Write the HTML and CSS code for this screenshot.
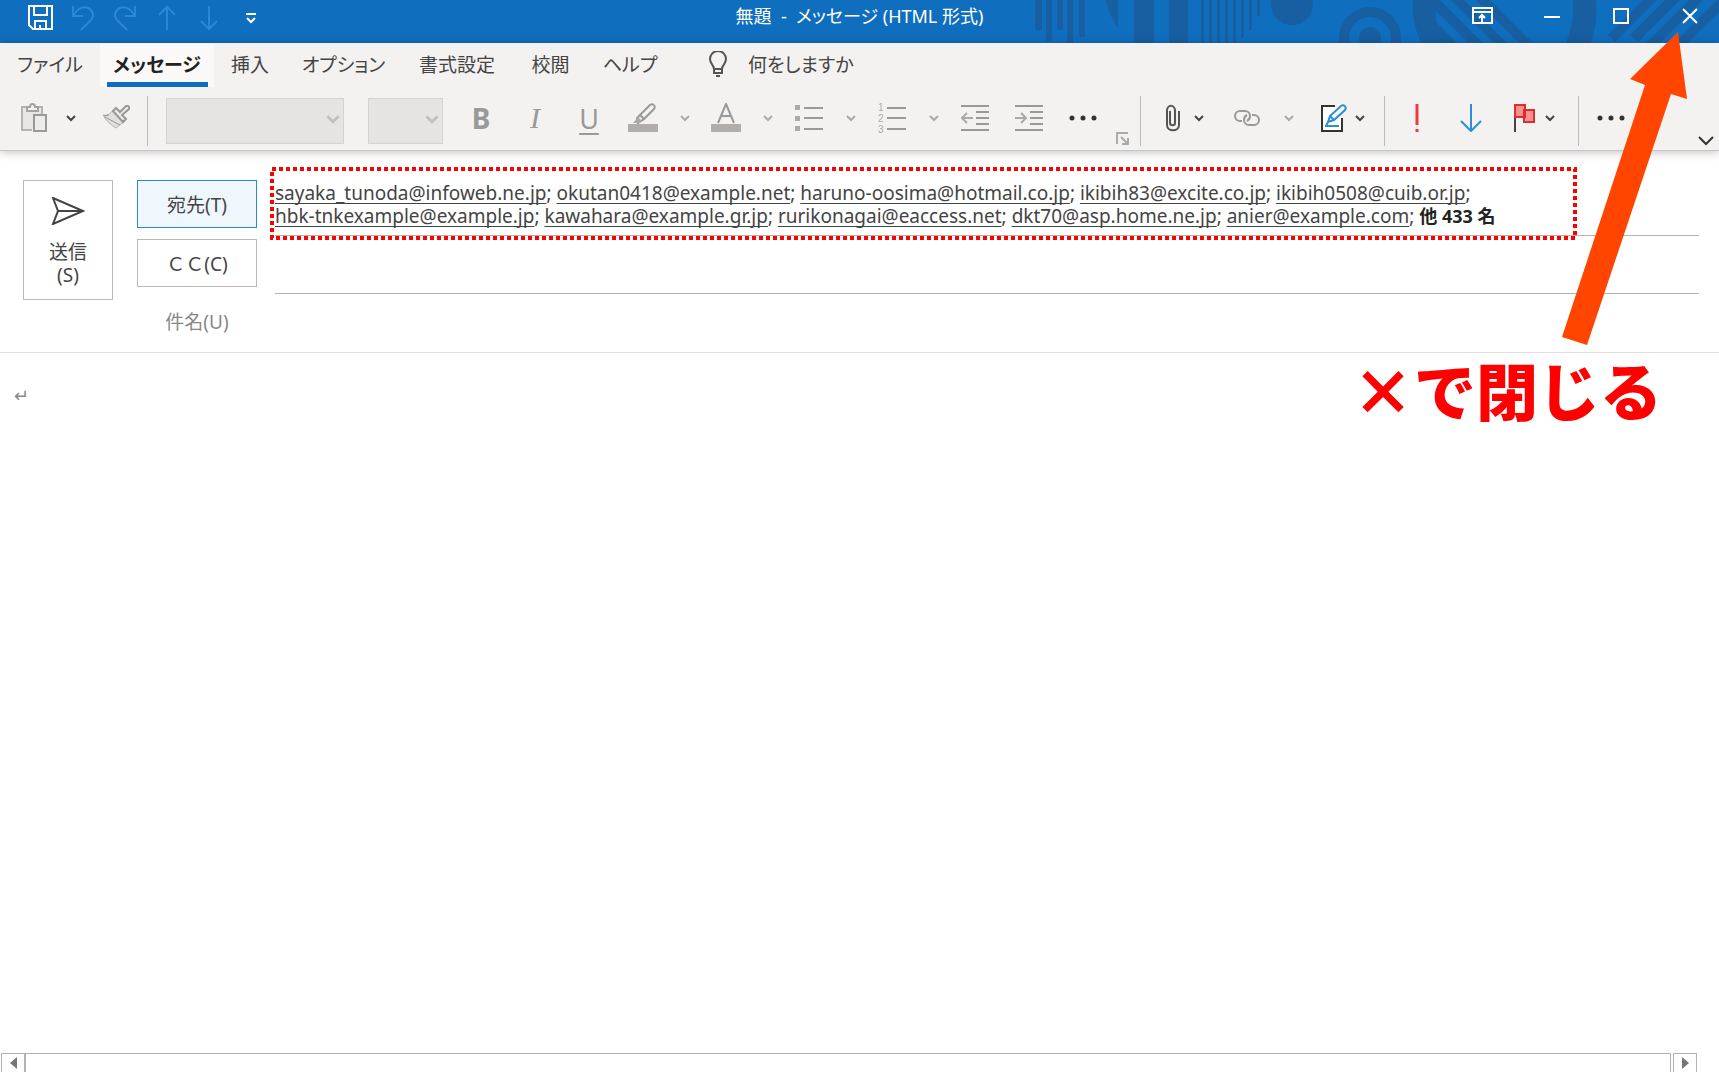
FILE: index.html
```html
<!DOCTYPE html>
<html lang="ja">
<head>
    <meta charset="UTF-8">
    <meta name="viewport" content="width=device-width, initial-scale=1.0">
    <title>無題 - メッセージ (HTML 形式)</title>
    <link rel="stylesheet" href="styles.css">
</head>
<body>

<svg class="defs" aria-hidden="true">
    <symbol id="chevron" viewBox="0 0 10 10"><path d="M1 3l4 4 4-4" fill="none" stroke="currentColor" stroke-width="2"/></symbol>
</svg>

<!-- Title bar -->
<header class="title-bar">
    <svg class="title-pattern" width="684" height="43" viewBox="0 0 684 43" aria-hidden="true">
        <g fill="#175fa1">
            <path d="M0 0h7v30H0zM11 0h6v41h-6zM22 0h6v30h-6zM32 0h6v43h-6zM44 0h6v37h-6z"/>
            <path d="M71 0h12v28Q75 18 71 0z"/>
            <path d="M99 0h20v43H99zM134 0h19v43h-19z"/>
            <path d="M166 0h3v43h-3zM174 0h3v43h-3zM182 0h3v43h-3zM190 0h3v43h-3zM198 0h3v43h-3zM206 0h3v38h-3zM214 0h3v30h-3zM222 0h3v16h-3z"/>
            <circle cx="257" cy="4" r="21"/>
            <circle cx="335" cy="38" r="11"/>
            <path d="M378 0h23v22L415 43H386Q376 20 378 0z"/>
            <path d="M401 0h4L448 43H434L401 11zM401 22L422 43H408L401 36zM416 0h13l43 43h-13zM441 0h14l43 43h-14z"/>
            <path d="M538 0h23q2 22-5 43h-25q9-22 7-43z"/>
            <path d="M573 35L608 0h14L580 42zM595 35L630 0h15L603 42zM611 43L654 0h14L625 43zM639 43L682 0h2v12L653 43z"/>
        </g>
        <circle cx="335" cy="38" r="26" fill="none" stroke="#175fa1" stroke-width="10"/>
    </svg>
    <div class="quick-access">
        <button class="quick" aria-label="上書き保存">
            <svg width="26" height="26" viewBox="0 0 26 26"><path d="M1 1h23v23H5l-4-4zM6 1v9h13V1M7 24v-8h11v8M12 24v-4" fill="none" stroke="#fff" stroke-width="2"/></svg>
        </button>
        <button class="quick" disabled aria-label="元に戻す">
            <svg width="24" height="26" viewBox="0 0 24 26"><path d="M2 1v10h10M2 11C7 3 12 1 17 3c6 3 6 9 3 12L10 25" fill="none" stroke="currentColor" stroke-width="2"/></svg>
        </button>
        <button class="quick" disabled aria-label="やり直し">
            <svg width="24" height="26" viewBox="0 0 24 26"><path d="M22 1v10H12M22 11C17 3 12 1 7 3 1 6 1 12 4 15l10 10" fill="none" stroke="currentColor" stroke-width="2"/></svg>
        </button>
        <button class="quick" disabled aria-label="前のアイテム">
            <svg width="18" height="26" viewBox="0 0 18 26"><path d="M9 25V2M1 10l8-8 8 8" fill="none" stroke="currentColor" stroke-width="2"/></svg>
        </button>
        <button class="quick" disabled aria-label="次のアイテム">
            <svg width="18" height="26" viewBox="0 0 18 26"><path d="M9 1v23M1 16l8 8 8-8" fill="none" stroke="currentColor" stroke-width="2"/></svg>
        </button>
        <button class="quick" aria-label="クイック アクセス ツール バーのカスタマイズ">
            <svg width="12" height="12" viewBox="0 0 12 12"><path d="M1 2h10M2 6l4 4 4-4" fill="none" stroke="#fff" stroke-width="2"/></svg>
        </button>
    </div>
    <div class="window-title">無題&nbsp; -&nbsp; メッセージ (HTML 形式)</div>
    <div class="window-buttons">
        <button class="window-btn" aria-label="リボンの表示オプション">
            <svg width="22" height="18" viewBox="0 0 22 18"><path d="M1 1h19v15H1zM1 5h19M10 15V8M7 11l3-3 3 3" fill="none" stroke="#fff" stroke-width="2"/></svg>
        </button>
        <button class="window-btn" aria-label="最小化">
            <svg width="16" height="16" viewBox="0 0 16 16"><path d="M0 9h16" stroke="#fff" stroke-width="2"/></svg>
        </button>
        <button class="window-btn" aria-label="最大化">
            <svg width="16" height="16" viewBox="0 0 16 16"><path d="M1 1h14v14H1z" fill="none" stroke="#fff" stroke-width="2"/></svg>
        </button>
        <button class="window-btn close" aria-label="閉じる">
            <svg width="16" height="16" viewBox="0 0 16 16"><path d="M1 1l14 14M15 1L1 15" stroke="#fff" stroke-width="2"/></svg>
        </button>
    </div>
</header>

<!-- Ribbon -->
<div class="ribbon">
    <nav class="tabs">
        <button class="tab">ファイル</button>
        <button class="tab active">メッセージ</button>
        <button class="tab">挿入</button>
        <button class="tab">オプション</button>
        <button class="tab">書式設定</button>
        <button class="tab">校閲</button>
        <button class="tab">ヘルプ</button>
        <button class="tab tell-me">
            <svg width="20" height="26" viewBox="0 0 20 26"><path d="M6 18c0-4-4-5-4-10a8 8 0 0 1 16 0c0 5-4 6-4 10zM6 18v4h8v-4M8 25h4" fill="none" stroke="#555" stroke-width="2"/></svg>
            何をしますか
        </button>
    </nav>

    <div class="toolbar">
        <div class="group clipboard">
            <button class="tool narrow" aria-label="貼り付け">
                <svg width="28" height="30" viewBox="0 0 28 30"><path d="M12 27H2V4h20v9" fill="#e8e7e6" stroke="#b3b3b3" stroke-width="2"/><path d="M7 8V4h3c0-4 5-4 5 0h3v4z" fill="#f3f2f1" stroke="#a3a3a3" stroke-width="2"/><path d="M14 12h12v16H14z" fill="#ececeb" stroke="#999" stroke-width="2"/></svg>
            </button>
            <button class="arrow dark" aria-label="貼り付けのオプション"><svg width="10" height="10"><use href="#chevron"/></svg></button>
            <button class="tool" aria-label="書式のコピー">
                <svg width="28" height="26" viewBox="0 0 28 26"><path d="M1 10c4 1 7-1 10-5l12 11-9 7C9 20 4 16 1 10z" fill="#e0dfde" stroke="#b3b3b3" stroke-width="1"/><path d="M3 12l15 8M7 10l-5 1" stroke="#999"/><path d="M11 6l3-3 4 4 6-6c2-1 4 1 3 3l-7 6 4 4-3 3z" fill="#ececeb" stroke="#999" stroke-width="2"/></svg>
            </button>
        </div>

        <div class="group font">
            <span class="combo">
                <select class="font-name" disabled aria-label="フォント"></select>
                <svg width="14" height="14"><use href="#chevron"/></svg>
            </span>
            <span class="combo">
                <select class="font-size" disabled aria-label="フォント サイズ"></select>
                <svg width="14" height="14"><use href="#chevron"/></svg>
            </span>
            <div class="tools">
                <button class="tool bold" disabled>B</button>
                <button class="tool italic" disabled>I</button>
                <button class="tool underline" disabled>U</button>
                <button class="tool" disabled aria-label="蛍光ペンの色">
                    <svg width="30" height="30" viewBox="0 0 30 30"><path d="M0 21h30v8H0z" fill="#b1adaa"/><path d="M12 12L22 2c3-2 6 1 4 4L16 16zM12 12l-3 3 1 5 6-4" fill="#f3f2f1" stroke="#999" stroke-width="2"/><path d="M5 20l5-6 4 4-3 2z" fill="#aaa"/></svg>
                </button>
                <button class="arrow" disabled aria-label="蛍光ペンの色の一覧"><svg width="10" height="10"><use href="#chevron"/></svg></button>
                <button class="tool" disabled aria-label="フォントの色">
                    <svg width="30" height="30" viewBox="0 0 30 30"><path d="M0 21h30v8H0z" fill="#b1adaa"/><path d="M7 20L15 1l8 19M10 13h10" fill="none" stroke="#999" stroke-width="2"/></svg>
                </button>
                <button class="arrow" disabled aria-label="フォントの色の一覧"><svg width="10" height="10"><use href="#chevron"/></svg></button>
                <button class="tool" disabled aria-label="箇条書き">
                    <svg width="28" height="28" viewBox="0 0 28 28"><path d="M0 1h5v5H0zM0 12h5v5H0zM0 22h5v5H0z" fill="#aaa"/><path d="M9 4h19M9 14h19M9 25h19" stroke="#999" stroke-width="2"/></svg>
                </button>
                <button class="arrow" disabled aria-label="行頭文字の一覧"><svg width="10" height="10"><use href="#chevron"/></svg></button>
                <button class="tool" disabled aria-label="段落番号">
                    <svg width="30" height="38" viewBox="0 0 30 38"><g class="list-number"><text x="1" y="12">1</text><text x="1" y="23">2</text><text x="1" y="34">3</text></g><path d="M10 9h19M10 19h19M10 30h19" stroke="#999" stroke-width="2"/></svg>
                </button>
                <button class="arrow" disabled aria-label="番号の一覧"><svg width="10" height="10"><use href="#chevron"/></svg></button>
                <button class="tool" disabled aria-label="インデントを減らす">
                    <svg width="28" height="28" viewBox="0 0 28 28"><path d="M0 2h28M15 8h13M15 14h13M15 20h13M0 26h28" stroke="#999" stroke-width="2"/><path d="M12 14H2M6 9l-5 5 5 5" fill="none" stroke="#aaa" stroke-width="2"/></svg>
                </button>
                <button class="tool" disabled aria-label="インデントを増やす">
                    <svg width="28" height="28" viewBox="0 0 28 28"><path d="M0 2h28M15 8h13M15 14h13M15 20h13M0 26h28" stroke="#999" stroke-width="2"/><path d="M0 14h11M6 9l5 5-5 5" fill="none" stroke="#aaa" stroke-width="2"/></svg>
                </button>
                <button class="tool" aria-label="その他の書式">
                    <svg width="28" height="6" viewBox="0 0 28 6"><path d="M3 3h0M14 3h0M25 3h0" stroke="#333" stroke-width="5" stroke-linecap="round"/></svg>
                </button>
            </div>
            <button class="launcher" aria-label="フォントの設定">
                <svg width="13" height="13" viewBox="0 0 13 13"><path d="M1 12V1h11M5 5l7 7M12 6v6H6" fill="none" stroke="#aaa" stroke-width="2"/></svg>
            </button>
        </div>

        <div class="group include">
            <button class="tool narrow" aria-label="ファイルの添付">
                <svg width="16" height="28" viewBox="0 0 16 28"><path d="M5 7v12c0 3 5 3 5 0V7c0-7-8-7-8 0v14c0 7 12 7 12 0V7" fill="none" stroke="#555" stroke-width="2"/></svg>
            </button>
            <button class="arrow small dark" aria-label="添付のオプション"><svg width="10" height="10"><use href="#chevron"/></svg></button>
            <button class="tool link" disabled aria-label="リンク">
                <svg width="28" height="18" viewBox="0 0 28 18"><path d="M9 12H7a5 5 0 0 1 0-10h5a5 5 0 0 1 5 5c0 2-1 4-3 5" fill="none" stroke="#999" stroke-width="2"/><path d="M19 6h2a5 5 0 0 1 0 10h-5a5 5 0 0 1-5-5c0-2 1-4 3-5" fill="none" stroke="#999" stroke-width="2"/></svg>
            </button>
            <button class="arrow" disabled aria-label="リンクのオプション"><svg width="10" height="10"><use href="#chevron"/></svg></button>
            <button class="tool narrow signature" aria-label="署名">
                <svg width="28" height="30" viewBox="0 0 28 30"><path d="M15 3H2v25h20V15" fill="#fff" stroke="#333" stroke-width="2"/><path d="M8 19l2-6L21 3c3-2 6 1 4 4L14 17zM8 19l-2 4M10 13l4 4M5 23h14" fill="#fff" stroke="#2b8fd6" stroke-width="2"/></svg>
            </button>
            <button class="arrow small dark" aria-label="署名のオプション"><svg width="10" height="10"><use href="#chevron"/></svg></button>
        </div>

        <div class="group tags">
            <button class="tool" aria-label="重要度 - 高">
                <svg width="6" height="28" viewBox="0 0 6 28"><path d="M3 0v21M3 25v3" stroke="#ee3a3f" stroke-width="3"/></svg>
            </button>
            <button class="tool" aria-label="重要度 - 低">
                <svg width="22" height="28" viewBox="0 0 22 28"><path d="M11 0v26M1 17l10 10 10-10" fill="none" stroke="#2b8fd6" stroke-width="2"/></svg>
            </button>
            <button class="tool narrow flag" aria-label="フラグの設定">
                <svg width="22" height="28" viewBox="0 0 22 28"><path d="M2 0v28" stroke="#444" stroke-width="2"/><path d="M2 1h10v12H2zM11 6h10v12H11z" fill="#ff8f94" stroke="#d9302c" stroke-width="2"/></svg>
            </button>
            <button class="arrow small dark" aria-label="フラグのオプション"><svg width="10" height="10"><use href="#chevron"/></svg></button>
        </div>

        <div class="group more">
            <button class="tool" aria-label="その他のコマンド">
                <svg width="28" height="6" viewBox="0 0 28 6"><path d="M3 3h0M14 3h0M25 3h0" stroke="#333" stroke-width="5" stroke-linecap="round"/></svg>
            </button>
        </div>

        <button class="expand" aria-label="リボンを展開">
            <svg width="16" height="10" viewBox="0 0 16 10"><path d="M1 1l7 7 7-7" fill="none" stroke="#333" stroke-width="2"/></svg>
        </button>
    </div>
</div>

<!-- Recipients and subject -->
<section class="mail-header">
    <button class="send">
        <svg width="34" height="28" viewBox="0 0 34 28"><path d="M2 1l30 13L2 27l5-13zM7 14h25" fill="none" stroke="#444" stroke-width="2"/></svg>
        <span>送信<br>(S)</span>
    </button>
    <div class="labels">
        <button class="label-btn selected">宛先(T)</button>
        <button class="label-btn">ＣＣ(C)</button>
        <label class="subject-label" for="subject">件名(U)</label>
    </div>
    <div class="fields">
        <div class="field to-field">
            <a href="mailto:sayaka_tunoda@infoweb.ne.jp">sayaka_tunoda@infoweb.ne.jp</a>;
            <a href="mailto:okutan0418@example.net">okutan0418@example.net</a>;
            <a href="mailto:haruno-oosima@hotmail.co.jp">haruno-oosima@hotmail.co.jp</a>;
            <a href="mailto:ikibih83@excite.co.jp">ikibih83@excite.co.jp</a>;
            <a href="mailto:ikibih0508@cuib.or.jp">ikibih0508@cuib.or.jp</a>;<br>
            <a href="mailto:hbk-tnkexample@example.jp">hbk-tnkexample@example.jp</a>;
            <a href="mailto:kawahara@example.gr.jp">kawahara@example.gr.jp</a>;
            <a href="mailto:rurikonagai@eaccess.net">rurikonagai@eaccess.net</a>;
            <a href="mailto:dkt70@asp.home.ne.jp">dkt70@asp.home.ne.jp</a>;
            <a href="mailto:anier@example.com">anier@example.com</a>;
            <strong>他 433 名</strong>
            <svg class="highlight" aria-hidden="true"><rect x="2" y="2" width="100%" height="100%"/></svg>
        </div>
        <input class="field" type="text" aria-label="CC">
        <input class="field last" type="text" id="subject">
    </div>
</section>

<!-- Message body -->
<textarea class="message" aria-label="本文">↵</textarea>

<div class="scrollbar">
    <button class="scroll-btn" aria-label="左へスクロール"><svg width="7" height="12" viewBox="0 0 7 12"><path d="M7 0v12L0 6z" fill="#777"/></svg></button>
    <div class="scroll-thumb"></div>
    <button class="scroll-btn" aria-label="右へスクロール"><svg width="7" height="12" viewBox="0 0 7 12"><path d="M0 0v12l7-6z" fill="#777"/></svg></button>
</div>

<!-- Callout pointing at the close button -->
<div class="callout">
    <svg width="126" height="313" viewBox="0 0 126 313" aria-hidden="true"><path d="M116 0l9 67-16-5-84 251-25-8L83 53l-15-6z" fill="#ff4500"/></svg>
    <p>×で閉じる</p>
</div>

</body>
</html>
```
FILE: styles.css
```css
* {
    box-sizing: border-box;
}

body {
    margin: 0;
    min-height: 100vh;
    display: flex;
    flex-direction: column;
    position: relative;
    background-color: #fff;
    color: #444;
    font-family: "Noto Sans", "Noto Sans CJK JP", sans-serif;
    font-size: 18px;
}

button {
    display: flex;
    align-items: center;
    justify-content: center;
    padding: 0;
    border: none;
    background: none;
    color: inherit;
    font: inherit;
}

svg {
    display: block;
    flex: none;
}

.defs {
    position: absolute;
    width: 0;
    height: 0;
}

/* Title bar */
.title-bar {
    position: relative;
    display: grid;
    grid-template-columns: 1fr auto 1fr;
    height: 43px;
    padding-bottom: 7px;
    background-color: #106ebe;
    color: #fff;
}

.title-pattern {
    position: absolute;
    top: 0;
    right: 0;
}

.quick-access {
    display: flex;
    padding-left: 20px;
}

.quick {
    width: 42px;
}

.quick:disabled {
    color: #2b88d8;
}

.window-title {
    align-self: center;
    line-height: 32px;
    padding-bottom: 4px;
    font-feature-settings: "palt";
}

.window-buttons {
    position: relative;
    display: flex;
    justify-content: flex-end;
    padding-bottom: 4px;
}

.window-btn {
    width: 69px;
}

.window-btn.close {
    width: 64px;
    padding-left: 6px;
}

/* Ribbon */
.ribbon {
    position: relative;
    background-color: #f3f2f1;
    border-bottom: 1px solid #c8c6c4;
    box-shadow: 0 1px 9px rgba(0, 0, 0, 0.25);
}

.tabs {
    display: grid;
    grid-template-columns: 100px 114px 72px 115px 112px 75px 84px auto 1fr;
    height: 43px;
    font-size: 19px;
    font-feature-settings: "palt";
}

.tab {
    height: 43px;
    padding-top: 4px;
    border-bottom: 5px solid transparent;
    white-space: nowrap;
}

.tab.active {
    margin-top: 1px;
    padding-top: 2px;
    background: linear-gradient(#106ebe, #106ebe) 50% 100% / 101px 5px no-repeat #faf9f8;
    background-origin: border-box;
    color: #222;
    font-weight: bold;
}

.tell-me {
    gap: 20px;
    padding-left: 36px;
}

.toolbar {
    display: flex;
    height: 64px;
    padding: 10px 0 4px;
}

.group {
    display: flex;
    align-items: center;
    border-right: 1px solid #bbb;
}

.clipboard {
    gap: 4px;
    padding-left: 16px;
    padding-right: 4px;
}

.font {
    padding-left: 18px;
    padding-right: 11px;
}

.include {
    padding-left: 14px;
    padding-right: 16px;
}

.tags {
    padding-left: 5px;
    padding-right: 20px;
}

.more {
    padding-left: 5px;
    border: none;
}

.tools {
    display: flex;
    margin-left: 11px;
}

.tool,
.arrow {
    width: 54px;
    height: 44px;
    padding-bottom: 6px;
}

.tool.narrow {
    width: 36px;
}

.tool:disabled {
    color: #999;
}

.link,
.signature {
    margin-left: 13px;
}

.flag {
    margin-left: 8px;
}

.arrow {
    width: 29px;
    color: #aaa;
}

.arrow.small {
    width: 16px;
}

.arrow.dark {
    color: #444;
}

.combo {
    position: relative;
    color: #c0c0c0;
}

.combo + .combo {
    margin-left: 24px;
}

.combo select {
    display: block;
    height: 46px;
    appearance: none;
    background-color: #e1dfdd;
    border: 1px solid #c8c6c4;
    border-radius: 0;
}

.combo svg {
    position: absolute;
    right: 4px;
    top: 14px;
}

.font-name {
    width: 178px;
}

.font-size {
    width: 75px;
}

.bold {
    font-size: 28px;
    font-weight: bold;
}

.italic {
    font-family: "Liberation Serif", serif;
    font-size: 30px;
    font-style: italic;
}

.underline {
    font-size: 27px;
    text-decoration: underline;
    text-decoration-thickness: 2px;
    text-underline-offset: 4px;
}

.list-number {
    fill: #aaa;
    font-family: "Liberation Sans", sans-serif;
    font-size: 10px;
}

.launcher {
    align-self: flex-end;
    height: 16px;
    margin-left: 6px;
}

.expand {
    align-self: flex-end;
    margin-left: auto;
    padding-right: 5px;
}

/* Recipients and subject */
.mail-header {
    display: flex;
    padding: 29px 20px 0 23px;
    border-bottom: 1px solid #e1dfdd;
    font-size: 19px;
}

.send {
    flex-direction: column;
    gap: 16px;
    width: 90px;
    height: 120px;
    padding-top: 3px;
    border: 1px solid #bbb8b5;
    line-height: 23px;
}

.labels {
    display: flex;
    flex-direction: column;
    gap: 11px;
    width: 120px;
    margin: 0 18px 0 24px;
}

.label-btn {
    height: 48px;
    border: 1px solid #bbb8b5;
}

.label-btn.selected {
    background-color: #eff6fc;
    border: 1px solid #2b88d8;
}

.subject-label {
    line-height: 48px;
    text-align: center;
    color: #888;
}

.fields {
    flex: 1;
    display: flex;
    flex-direction: column;
}

.field {
    height: 58px;
    border: none;
    border-bottom: 1px solid #b3b3b3;
    background: none;
    font: inherit;
    outline: none;
}

.field.last {
    border: none;
}

.to-field {
    position: relative;
    height: 56px;
    padding-top: 2px;
    line-height: 23px;
    white-space: nowrap;
}

.to-field a {
    color: inherit;
    text-decoration: underline;
    text-decoration-skip-ink: none;
    text-underline-offset: 3px;
}

.to-field strong {
    color: #222;
    font-size: 18px;
}

.highlight {
    position: absolute;
    left: -5px;
    top: -13px;
    width: calc(100% - 121px);
    height: 69px;
    overflow: visible;
}

.highlight rect {
    fill: none;
    stroke: #f00;
    stroke-width: 4px;
    stroke-dasharray: 4 3;
}

/* Message body */
.message {
    flex: 1;
    padding: 30px 14px;
    border: none;
    outline: none;
    resize: none;
    color: #888;
    font: inherit;
}

.scrollbar {
    display: flex;
    height: 19px;
    margin: 0 22px 5px 1px;
}

.scroll-btn {
    width: 24px;
    border: 1px solid #b3b3b3;
    border-bottom: none;
}

.scroll-thumb {
    flex: 1;
    margin-right: 2px;
    border: 1px solid #b3b3b3;
    border-bottom: none;
}

/* Callout */
.callout {
    position: absolute;
    top: 32px;
    right: 31px;
    pointer-events: none;
}

.callout svg {
    margin-left: auto;
}

.callout p {
    margin: 0 26px 0 0;
    color: #f00;
    font-family: "Noto Sans CJK JP", sans-serif;
    font-size: 62px;
    font-weight: 900;
    line-height: 88px;
}
```
